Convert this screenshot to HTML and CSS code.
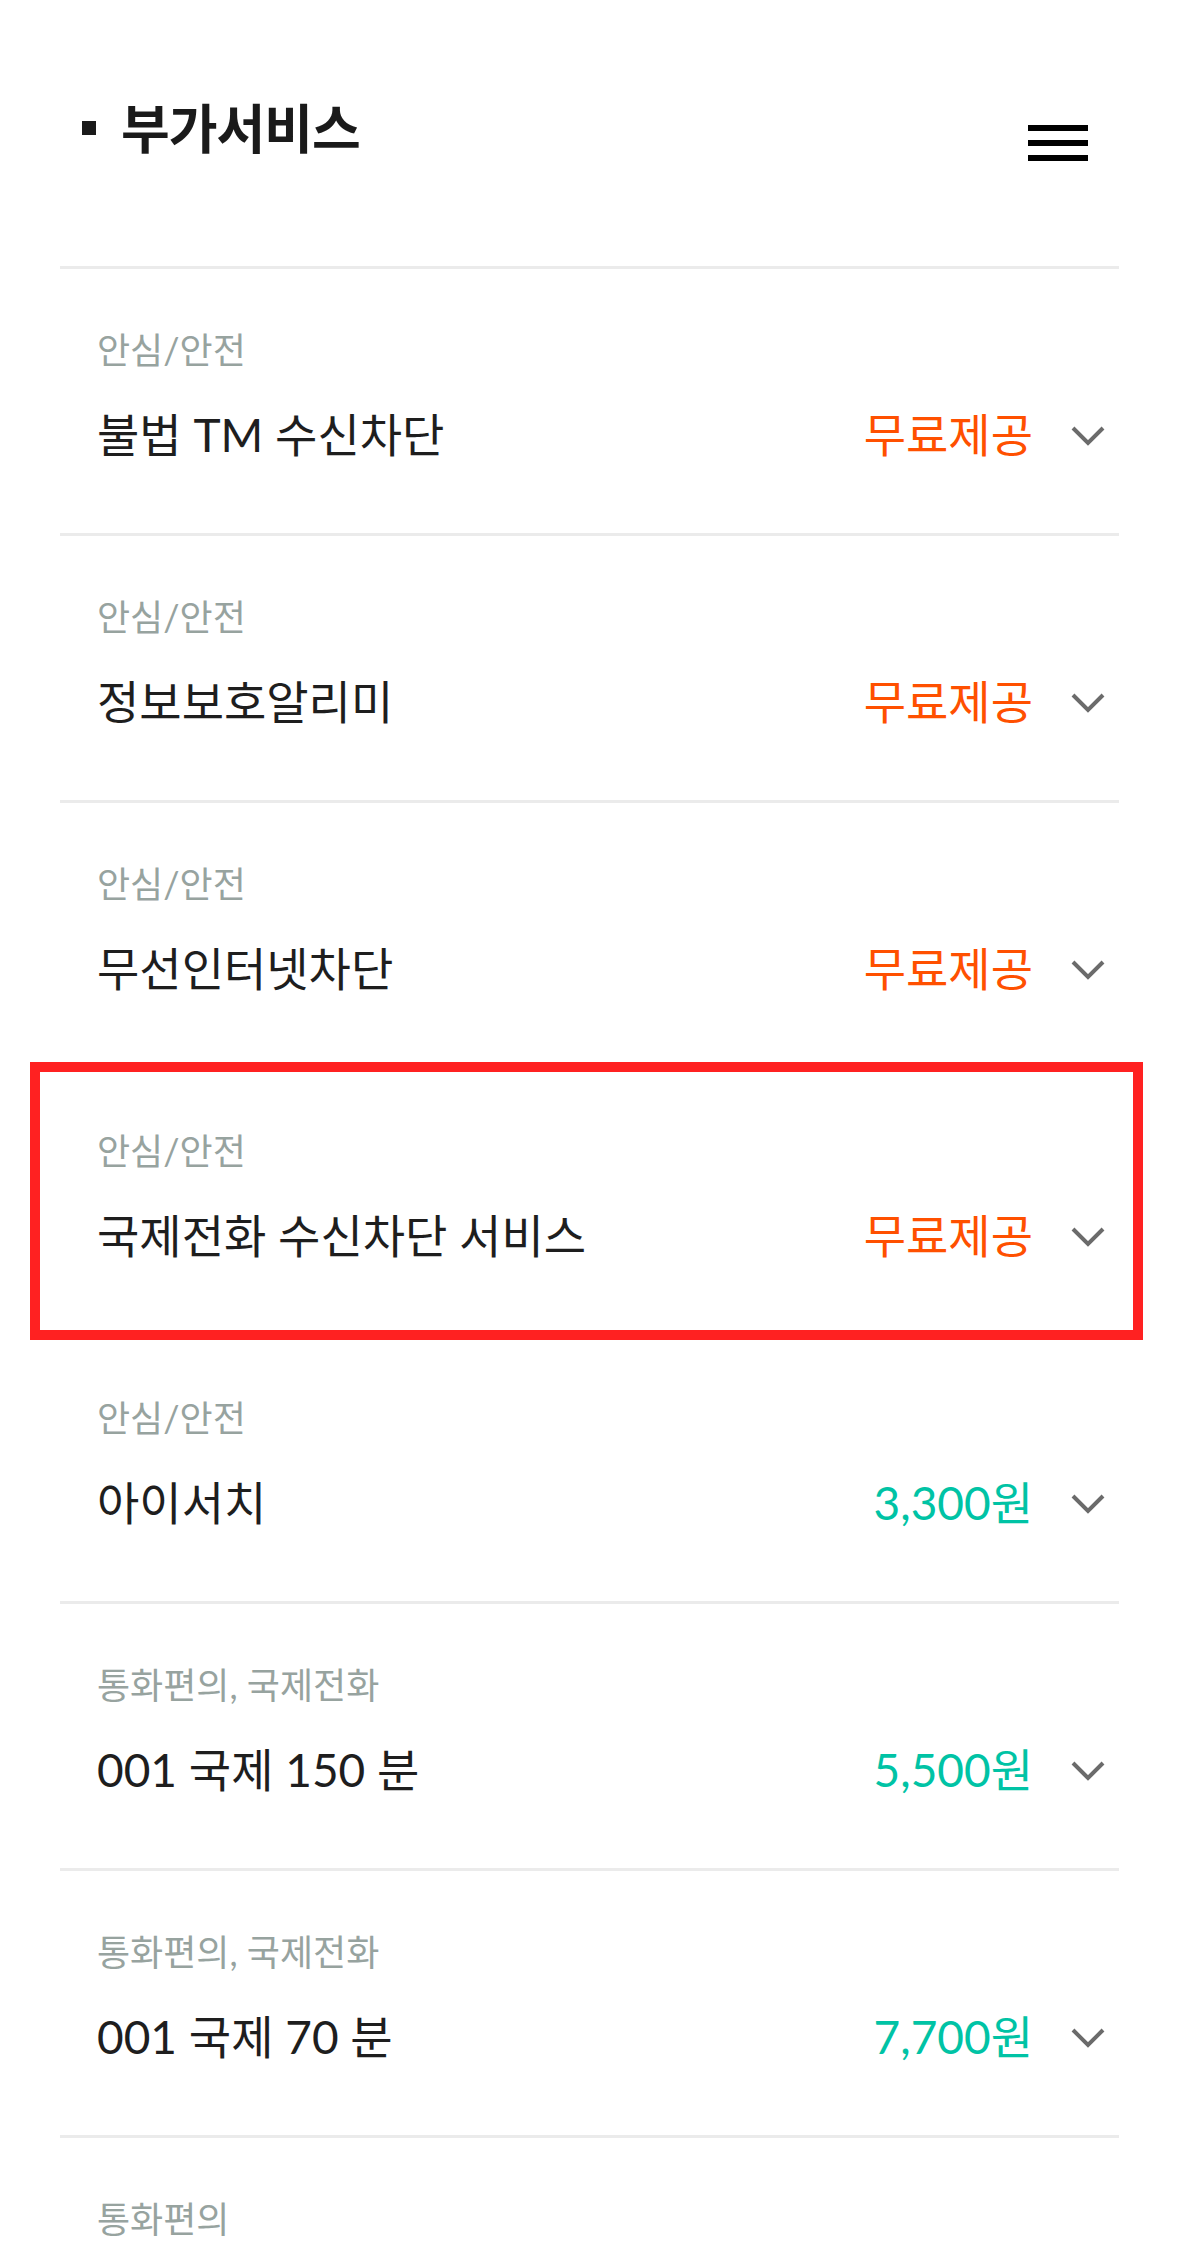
FILE: index.html
```html
<!DOCTYPE html>
<html lang="ko">
<head>
<meta charset="utf-8">
<title>부가서비스</title>
<link rel="stylesheet" href="styles.css">
</head>
<body>
<div class="page">
  <header class="header">
    <h1 class="title"><span class="bullet"></span>부가서비스</h1>
    <button class="menu" aria-label="메뉴">
      <span class="bar"></span><span class="bar"></span><span class="bar"></span>
    </button>
  </header>
  <ul class="list">
    <li class="row">
      <div class="cat">안심/안전</div>
      <div class="line"><span class="name">불법 TM 수신차단</span><span class="price free">무료제공</span><svg class="chev" viewBox="0 0 34 21"><path d="M2 2 L17 17 L32 2"/></svg></div>
    </li>
    <li class="row">
      <div class="cat">안심/안전</div>
      <div class="line"><span class="name">정보보호알리미</span><span class="price free">무료제공</span><svg class="chev" viewBox="0 0 34 21"><path d="M2 2 L17 17 L32 2"/></svg></div>
    </li>
    <li class="row">
      <div class="cat">안심/안전</div>
      <div class="line"><span class="name">무선인터넷차단</span><span class="price free">무료제공</span><svg class="chev" viewBox="0 0 34 21"><path d="M2 2 L17 17 L32 2"/></svg></div>
    </li>
    <li class="row highlighted">
      <div class="cat">안심/안전</div>
      <div class="line"><span class="name">국제전화 수신차단 서비스</span><span class="price free">무료제공</span><svg class="chev" viewBox="0 0 34 21"><path d="M2 2 L17 17 L32 2"/></svg></div>
      <div class="mark"></div>
    </li>
    <li class="row">
      <div class="cat">안심/안전</div>
      <div class="line"><span class="name">아이서치</span><span class="price paid">3,300원</span><svg class="chev" viewBox="0 0 34 21"><path d="M2 2 L17 17 L32 2"/></svg></div>
    </li>
    <li class="row">
      <div class="cat">통화편의, 국제전화</div>
      <div class="line"><span class="name">001 국제 150 분</span><span class="price paid">5,500원</span><svg class="chev" viewBox="0 0 34 21"><path d="M2 2 L17 17 L32 2"/></svg></div>
    </li>
    <li class="row">
      <div class="cat">통화편의, 국제전화</div>
      <div class="line"><span class="name">001 국제 70 분</span><span class="price paid">7,700원</span><svg class="chev" viewBox="0 0 34 21"><path d="M2 2 L17 17 L32 2"/></svg></div>
    </li>
    <li class="row">
      <div class="cat">통화편의</div>
    </li>
  </ul>
</div>
</body>
</html>
```

FILE: styles.css
```css
html, body {
  margin: 0;
  padding: 0;
  background: #ffffff;
}
body {
  font-family: Lato, "Noto Sans CJK KR", "Noto Sans", sans-serif;
  color: #1e1e1e;
  overflow: hidden;
}
.page {
  width: 1179px;
  height: 2267px;
  overflow: hidden;
}
.header {
  height: 266px;
  box-sizing: border-box;
  padding: 100px 91px 0 82px;
  display: flex;
  justify-content: space-between;
  align-items: flex-start;
}
.title {
  margin: 0;
  display: flex;
  align-items: center;
  font-family: "Noto Sans CJK KR", sans-serif;
  font-weight: 700;
  font-size: 53px;
  line-height: 1;
  letter-spacing: -1px;
  color: #1a1a1a;
}
.bullet {
  width: 14px;
  height: 14px;
  background: #1a1a1a;
  margin-right: 25px;
  margin-top: 2px;
}
.menu {
  border: 0;
  background: none;
  padding: 0;
  margin-top: 25px;
  width: 60px;
  display: flex;
  flex-direction: column;
  gap: 9px;
}
.bar {
  display: block;
  width: 60px;
  height: 6px;
  background: #000;
}
.list {
  list-style: none;
  margin: 0 60px;
  padding: 0;
}
.row {
  position: relative;
  height: 267px;
  box-sizing: border-box;
  border-top: 3px solid #ebebeb;
  padding: 60px 14px 0 37px;
}
.cat {
  font-size: 36px;
  line-height: 42px;
  letter-spacing: 0;
  color: #97a39f;
}
.line {
  display: flex;
  align-items: center;
  margin-top: 34px;
  height: 54px;
}
.name {
  flex: 1;
  font-size: 46px;
  letter-spacing: 0;
  color: #1e1e1e;
}
.price {
  font-size: 46px;
  letter-spacing: 0;
}
.free { color: #ff5000; }
.paid { color: #00c3a5; }
.chev {
  width: 34px;
  height: 21px;
  margin-left: 38px;
  margin-top: 8px;
  fill: none;
  stroke: #6b6b6b;
  stroke-width: 4;
}
.mark {
  position: absolute;
  z-index: 2;
  top: -8px;
  left: -30px;
  right: -24px;
  bottom: -6px;
  border: 10px solid #ff2121;
  pointer-events: none;
}
```
